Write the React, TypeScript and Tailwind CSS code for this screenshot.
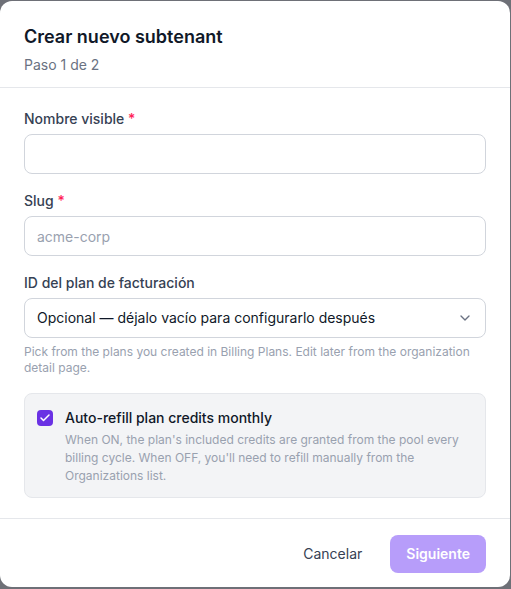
import { ChevronDown, Check } from "lucide-react";

function FieldLabel({ children, required }: { children: React.ReactNode; required?: boolean }) {
  return (
    <label className="block text-sm font-medium text-gray-700 mb-[5px] leading-5">
      {children}
      {required && <span className="text-rose-500"> *</span>}
    </label>
  );
}

export default function App() {
  return (
    <div
      className="w-[511px] h-[589px] bg-[#6e7077] overflow-hidden pt-px"
      style={{ fontFamily: "Inter, 'Noto Sans', sans-serif" }}
    >
      <div className="w-[510px] h-[586px] bg-white rounded-xl flex flex-col">
        {/* Cabecera */}
        <div className="px-6 pt-[22px] pb-[12px] border-b border-gray-200">
          <h2 className="text-lg font-semibold text-gray-900 leading-7">Crear nuevo subtenant</h2>
          <p className="text-sm text-gray-500 mt-1 leading-5">Paso 1 de 2</p>
        </div>

        {/* Cuerpo */}
        <div className="px-6 pt-[21px] pb-[20px] border-b border-gray-200 flex flex-col">
          <div>
            <FieldLabel required>Nombre visible</FieldLabel>
            <input
              type="text"
              className="w-full h-10 rounded-lg border border-gray-300 px-3 text-sm outline-none"
            />
          </div>

          <div className="mt-[17px]">
            <FieldLabel required>Slug</FieldLabel>
            <input
              type="text"
              placeholder="acme-corp"
              className="w-full h-10 rounded-lg border border-gray-300 px-3 text-sm outline-none placeholder:text-gray-400"
            />
          </div>

          <div className="mt-[17px]">
            <FieldLabel>ID del plan de facturación</FieldLabel>
            <div className="w-full h-10 rounded-lg border border-gray-300 px-3 flex items-center justify-between">
              <span className="text-sm text-gray-900">Opcional — déjalo vacío para configurarlo después</span>
              <ChevronDown className="h-4 w-4 text-gray-500" strokeWidth={2} />
            </div>
            <p className="text-xs text-gray-400 mt-[6px] leading-4">
              Pick from the plans you created in Billing Plans. Edit later from the organization detail page.
            </p>
          </div>

          <div className="mt-[17px] rounded-lg border border-gray-200 bg-gray-100 px-[12px] pt-[14px] pb-[12px] flex gap-3">
            <div className="mt-[2px] h-4 w-4 shrink-0 rounded bg-[#6a31e4] flex items-center justify-center">
              <Check className="h-3 w-3 text-white" strokeWidth={3} />
            </div>
            <div>
              <p className="text-sm font-medium text-gray-900 leading-5">Auto-refill plan credits monthly</p>
              <p className="text-xs text-gray-400 leading-[18px] mt-[3px]">
                When ON, the plan's included credits are granted from the pool every billing cycle. When OFF, you'll
                need to refill manually from the Organizations list.
              </p>
            </div>
          </div>
        </div>

        {/* Pie */}
        <div className="px-6 pt-4 flex items-center justify-end gap-3">
          <button className="px-4 h-[38px] text-sm font-normal text-gray-700 rounded-lg">Cancelar</button>
          <button className="px-4 h-[38px] text-sm font-semibold text-white rounded-lg bg-[#b79dfa]">
            Siguiente
          </button>
        </div>
      </div>
    </div>
  );
}
